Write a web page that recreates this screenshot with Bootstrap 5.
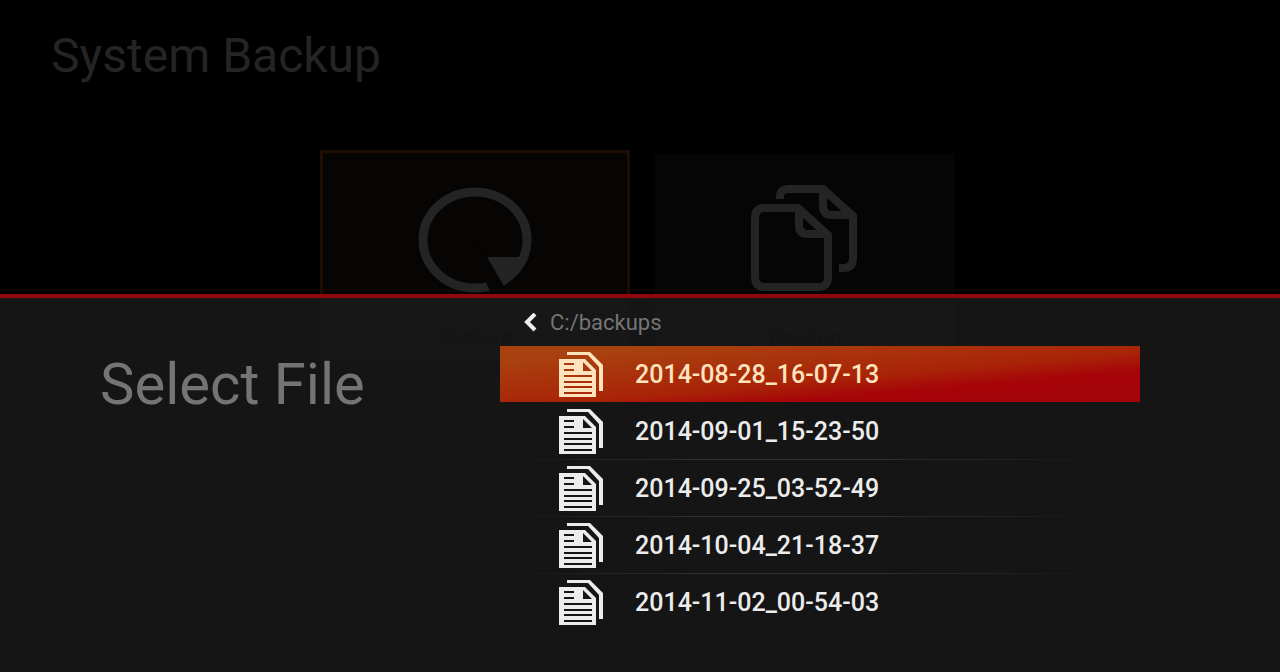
<!DOCTYPE html>
<html lang="en">
<head>
<meta charset="utf-8">
<meta name="viewport" content="width=device-width, initial-scale=1">
<title>System Backup</title>
<link rel="stylesheet" href="https://cdn.jsdelivr.net/npm/bootstrap@5.3.0/dist/css/bootstrap.min.css">
<style>
  body { background: #000; font-family: Roboto, "Liberation Sans", sans-serif; }
  .screen-title { color: #242424; font-size: 48px; line-height: 56px; padding: 28px 51px 0; font-weight: 400; }
  .tiles { padding: 66px 5px 0 0; gap: 25px; }
  .tile { width: 300px; height: 204px; margin-top: 4px; padding: 28px 0 6px; background: linear-gradient(#050506 70%, #070707 72%); color: #242424; border: 0; border-radius: 0; }
  .tile-active { width: 310px; height: 208px; margin-top: 0; padding: 29px 0 4px; background: linear-gradient(#060504 70%, #070707 72%); border: 3px solid; border-image: linear-gradient(#1e0d03 70%, #070707 72%) 3; }
  .tile-label { color: #000; font-size: 22px; line-height: 28px; font-weight: 500; }
  .sheet { background: rgba(30, 30, 30, .7); border-top: 4px solid #90070d; padding-bottom: 41px; }
  .sheet-title { color: #747474; font-size: 58px; line-height: 64px; padding: 54px 0 0 100px; font-weight: 400; }
  .side { width: 39.0625%; }
  .files { width: 50%; }
  .path { color: #757575; font-size: 22px; line-height: 28px; height: 48px; padding: 2px 24px 0; gap: 13px; text-decoration: none; }
  .file-row { height: 57px; padding: 0 0 0 58px; gap: 31px; border: 0; border-bottom: 1px solid transparent; color: #ececec; background: none; font-size: 25px; font-weight: 500; text-align: left; }
  .file-row span { padding-top: 2px; }
  .file-line { border-image: linear-gradient(90deg, transparent, #2e2e2e 30%, #2e2e2e 60%, transparent 95%) 1; }
  .file-active { color: #ffe3bd; background: linear-gradient(175deg, #a9400f 15%, #a92408 55%, #a60508 72%, #a20508) padding-box; }
</style>
</head>
<body class="min-vh-100 position-relative overflow-hidden">
<svg class="d-none" aria-hidden="true">
  <symbol id="files" viewBox="0 0 46 46">
    <path d="M9 1h23l13 13v26h-4V16L30 4H9z"/>
    <path fill-rule="evenodd" d="M1 8h26l11 11v27H1zM6 12v2h10v-2zM6 18v2h10v-2zM25 11v9h9zM6 24v2h28v-2zM6 30v2h28v-2zM6 35v2h28v-2zM6 41v2h28v-2z"/>
  </symbol>
</svg>

<main>
  <h1 class="screen-title m-0">System Backup</h1>
  <div class="tiles d-flex justify-content-center">
    <button class="tile tile-active d-flex flex-column align-items-center justify-content-between" type="button">
      <svg width="124" height="116" viewBox="0 0 124 116" aria-hidden="true">
        <ellipse cx="62" cy="58" rx="52" ry="48" fill="none" stroke="currentColor" stroke-width="9"/>
        <path d="M62 60L71 96L79 114L100 110L92 95z" fill="#060504"/>
        <path d="M74 75h36l-5 17-14 12z" fill="currentColor"/>
      </svg>
      <span class="tile-label">Restore</span>
    </button>
    <button class="tile d-flex flex-column align-items-center justify-content-between" type="button">
      <svg width="108" height="112" viewBox="0 0 108 112" fill="none" stroke="currentColor" stroke-width="8" aria-hidden="true">
        <path d="M29 17v-2q0-8 9-8h34l30 27v42q0 10-10 10h-4M72 7v17q0 9 9 9h20"/>
        <path d="M14 26h33l30 27v42q0 10-10 10H14q-10 0-10-10V36q0-10 10-10zM48 26v17q0 9 9 9h19"/>
      </svg>
      <span class="tile-label">Backup</span>
    </button>
  </div>
</main>

<section class="sheet position-absolute bottom-0 start-0 end-0 d-flex">
  <div class="side"><h2 class="sheet-title m-0">Select File</h2></div>
  <div class="files">
    <a href="#" class="path d-flex align-items-center">
      <svg width="13" height="20" viewBox="0 0 13 20" fill="none" stroke="#eee" stroke-width="4" aria-hidden="true"><path d="M11 1L3 9l8 8"/></svg>C:/backups
    </a>
    <button type="button" class="file-row file-active d-flex align-items-center w-100"><svg width="46" height="46" fill="currentColor" aria-hidden="true"><use href="#files"/></svg><span>2014-08-28_16-07-13</span></button>
    <button type="button" class="file-row file-line d-flex align-items-center w-100"><svg width="46" height="46" fill="currentColor" aria-hidden="true"><use href="#files"/></svg><span>2014-09-01_15-23-50</span></button>
    <button type="button" class="file-row file-line d-flex align-items-center w-100"><svg width="46" height="46" fill="currentColor" aria-hidden="true"><use href="#files"/></svg><span>2014-09-25_03-52-49</span></button>
    <button type="button" class="file-row file-line d-flex align-items-center w-100"><svg width="46" height="46" fill="currentColor" aria-hidden="true"><use href="#files"/></svg><span>2014-10-04_21-18-37</span></button>
    <button type="button" class="file-row d-flex align-items-center w-100"><svg width="46" height="46" fill="currentColor" aria-hidden="true"><use href="#files"/></svg><span>2014-11-02_00-54-03</span></button>
  </div>
</section>
<script src="https://cdn.jsdelivr.net/npm/bootstrap@5.3.0/dist/js/bootstrap.bundle.min.js"></script>
</body>
</html>
